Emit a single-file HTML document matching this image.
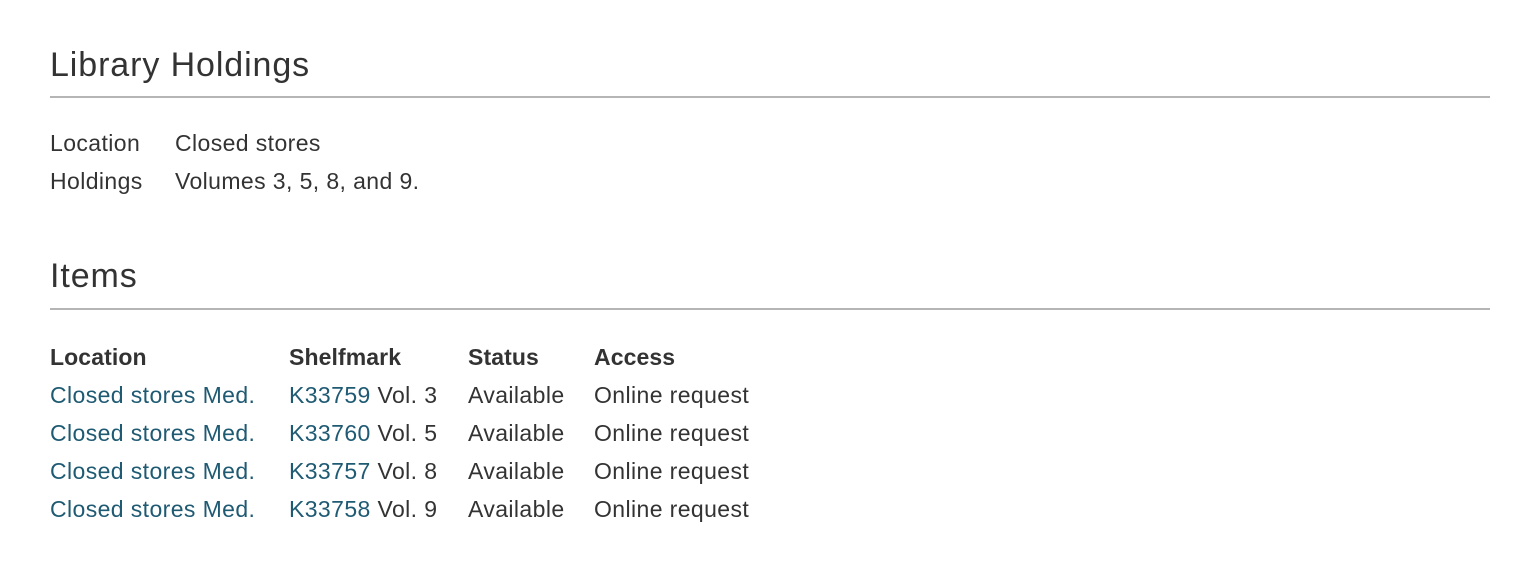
<!DOCTYPE html>
<html><head><style>
body{margin:0;width:1540px;height:572px;background:#fff;font-family:"Liberation Sans",Arial,sans-serif;color:#333;position:relative;overflow:hidden}
div.t{position:absolute;font-size:23px;letter-spacing:0.4px;line-height:38px;white-space:nowrap}
h2{position:absolute;margin:0;font-weight:normal;font-size:34px;letter-spacing:0.9px;line-height:40px;left:50px;white-space:nowrap}
.hr{position:absolute;left:50px;width:1440px;height:2px;background:#b5b5b5}
a{color:#1f5a73;text-decoration:none}
b{font-weight:bold;letter-spacing:0.1px}
</style></head><body>
<h2 style="top:45px">Library Holdings</h2>
<div class="hr" style="top:96px"></div>
<div class="t" style="left:50px;top:124px">Location</div>
<div class="t" style="left:175px;top:124px">Closed stores</div>
<div class="t" style="left:50px;top:162px">Holdings</div>
<div class="t" style="left:175px;top:162px">Volumes 3, 5, 8, and 9.</div>
<h2 style="top:256px">Items</h2>
<div class="hr" style="top:308px"></div>
<div class="t" style="left:50px;top:338px"><b>Location</b></div>
<div class="t" style="left:289px;top:338px"><b>Shelfmark</b></div>
<div class="t" style="left:468px;top:338px"><b>Status</b></div>
<div class="t" style="left:594px;top:338px"><b>Access</b></div>

<div class="t" style="left:50px;top:376px"><a>Closed stores Med.</a></div>
<div class="t" style="left:289px;top:376px"><a>K33759</a> Vol. 3</div>
<div class="t" style="left:468px;top:376px">Available</div>
<div class="t" style="left:594px;top:376px">Online request</div>

<div class="t" style="left:50px;top:414px"><a>Closed stores Med.</a></div>
<div class="t" style="left:289px;top:414px"><a>K33760</a> Vol. 5</div>
<div class="t" style="left:468px;top:414px">Available</div>
<div class="t" style="left:594px;top:414px">Online request</div>

<div class="t" style="left:50px;top:452px"><a>Closed stores Med.</a></div>
<div class="t" style="left:289px;top:452px"><a>K33757</a> Vol. 8</div>
<div class="t" style="left:468px;top:452px">Available</div>
<div class="t" style="left:594px;top:452px">Online request</div>

<div class="t" style="left:50px;top:490px"><a>Closed stores Med.</a></div>
<div class="t" style="left:289px;top:490px"><a>K33758</a> Vol. 9</div>
<div class="t" style="left:468px;top:490px">Available</div>
<div class="t" style="left:594px;top:490px">Online request</div>
</body></html>
